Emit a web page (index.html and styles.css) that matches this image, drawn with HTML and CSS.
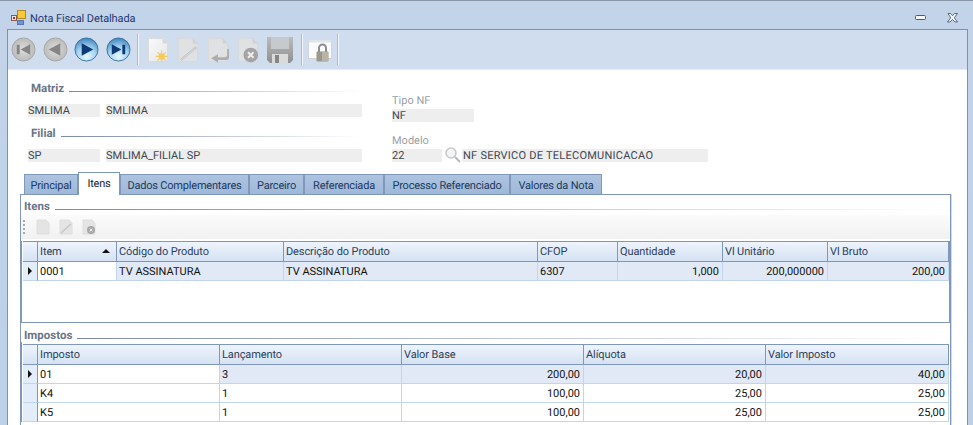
FILE: index.html
```html
<!DOCTYPE html>
<html lang="pt">
<head>
<meta charset="utf-8">
<title>Nota Fiscal Detalhada</title>
<link rel="stylesheet" href="styles.css">
</head>
<body>
<div class="window">
  <header class="titlebar">
    <svg class="app-icon" width="16" height="16" viewBox="0 0 16 16"><rect x="0.500" y="5.500" width="5" height="5" fill="#e8e8e8" stroke="#8a5a50"/><rect x="2" y="7" width="2" height="2" fill="#c8281c"/><rect x="6.500" y="0.500" width="8" height="8" fill="#f7c934" stroke="#b08a20"/><rect x="6.500" y="10.500" width="6" height="4" fill="#6c94d8" stroke="#5a78b0"/></svg>
    <span class="title">Nota Fiscal Detalhada</span>
    <span class="win-btns">
      <svg width="12" height="6" viewBox="0 0 12 6"><rect x="0.500" y="0.500" width="10" height="4" rx="1" fill="#f4f6fa" stroke="#4c5a70"/></svg>
      <svg width="12" height="10" viewBox="0 0 12 10"><path d="M1 .5h2.500L5.500 2.700 7.500 .5H10.500L7.300 4.800l3.200 4.200H8L5.500 6.500 3 9H.5l3.200-4.200z" fill="#f4f6fa" stroke="#4c5a70" stroke-width=".9"/></svg>
    </span>
  </header>
  <div class="client">
    <div class="toolbar">
      <svg class="nav" viewBox="0 0 26 26"><defs><radialGradient id="g" cx=".5" cy=".5" r=".6"><stop offset="0" stop-color="#dedede"/><stop offset="1" stop-color="#b4b4b4"/></radialGradient></defs><circle cx="13" cy="13" r="12" fill="url(#g)" stroke="#a8a8a8"/><path d="M6 8h3v10H6zM20 7.500v11L10 13z" fill="#858585"/></svg>
      <svg class="nav" viewBox="0 0 26 26"><circle cx="13" cy="13" r="12" fill="url(#g)" stroke="#a8a8a8"/><path d="M18 6.500v13L6 13z" fill="#858585"/></svg>
      <svg class="nav" viewBox="0 0 26 26"><defs><radialGradient id="b" cx=".5" cy=".8" r=".8"><stop offset="0" stop-color="#e8f6fe"/><stop offset=".5" stop-color="#a6d5f2"/><stop offset="1" stop-color="#3f82ba"/></radialGradient></defs><circle cx="13" cy="13" r="12" fill="url(#b)" stroke="#3a759f"/><path d="M8 6.500v13L20 13z" fill="#0e3a78"/></svg>
      <svg class="nav" viewBox="0 0 26 26"><circle cx="13" cy="13" r="12" fill="url(#b)" stroke="#3a759f"/><path d="M6 7.500v11L16 13zM17 8h3v10h-3z" fill="#0e3a78"/></svg>
      <i class="sep s1"></i>
      <svg class="tool" viewBox="0 0 24 28"><defs><linearGradient id="d" x1="0" y1="0" x2="1" y2="1"><stop offset="0" stop-color="#fafafa"/><stop offset="1" stop-color="#e6e6e6"/></linearGradient></defs><path d="M1.500 1.500H17L22.500 7V26.500H1.500z" fill="url(#d)" stroke="#d8d8d8"/><path d="M17 1.500V7H22.500z" fill="#d8d8d8"/><circle cx="16" cy="21" r="3.500" fill="#f5cb58"/><path d="M16 14.500v13M9.500 21h13M11.500 16.500l9 9M20.500 16.500l-9 9" stroke="#f5cb58" stroke-width="1.200"/></svg>
      <svg class="tool" viewBox="0 0 24 28"><path d="M1.500 1.500H17L22.500 7V26.500H1.500z" fill="#dfe1e3" stroke="#d6d8da"/><path d="M17 1.500V7H22.500z" fill="#cfd2d6"/><path d="M4 25L21 11" stroke="#c4c4c4" stroke-width="2.500"/><path d="M3 26L20 12" stroke="#eee" stroke-width=".6"/></svg>
      <svg class="tool" viewBox="0 0 24 28"><path d="M1.500 1.500H17L22.500 7V26.500H1.500z" fill="#dfe1e3" stroke="#d6d8da"/><path d="M17 1.500V7H22.500z" fill="#cfd2d6"/><path d="M22 13v6q0 3-3 3h-7v-3.500L4.500 23l7.500 5v-3h9q3 0 3-3v-9z" fill="#aeaeae"/></svg>
      <svg class="tool" viewBox="0 0 24 28"><path d="M1.500 1.500H17L22.500 7V26.500H1.500z" fill="#dfe1e3" stroke="#d6d8da"/><path d="M17 1.500V7H22.500z" fill="#cfd2d6"/><circle cx="15" cy="19.500" r="8" fill="#a4a4a4"/><path d="M12 16.500l6 6M18 16.500l-6 6" stroke="#eee" stroke-width="2.200"/></svg>
      <svg class="tool disk" viewBox="0 0 28 28"><defs><linearGradient id="k" x1="0" y1="0" x2="0" y2="1"><stop offset="0" stop-color="#bcbcbc"/><stop offset="1" stop-color="#8f8f8f"/></linearGradient></defs><path d="M1 1h26v23l-3 3H4l-3-3z" fill="url(#k)"/><rect x="5" y="1" width="18" height="12" fill="#c6cacd"/><rect x="6" y="18" width="16" height="9" fill="#dadada"/><rect x="9" y="19" width="4" height="8" fill="#858585"/></svg>
      <i class="sep s2"></i>
      <svg class="tool lock" viewBox="0 0 24 26"><rect x="0.500" y="2.500" width="23" height="19" fill="#fbfbfb" stroke="#d4d4d4"/><rect x="0.500" y="2.500" width="23" height="3" fill="#dfe3ea"/><path d="M11 15v-4a3.500 3.500 0 0 1 7 0v4" fill="none" stroke="#8c8c8c" stroke-width="2"/><rect x="8.500" y="14.500" width="12" height="10" rx="1" fill="#9c988a"/><rect x="14" y="15" width="6" height="9" fill="#b8b4a6"/></svg>
      <i class="sep s3"></i>
    </div>
    <main class="body">
      <section class="head">
        <div class="col-left">
          <div class="rule-title first"><b>Matriz</b><span></span></div>
          <div class="fields"><span class="val code">SMLIMA</span><span class="val name">SMLIMA</span></div>
          <div class="rule-title second"><b>Filial</b><span></span></div>
          <div class="fields"><span class="val code">SP</span><span class="val name">SMLIMA_FILIAL SP</span></div>
        </div>
        <div class="col-right">
          <label class="cap">Tipo NF</label>
          <div class="fields"><span class="val tipo">NF</span></div>
          <label class="cap model">Modelo</label>
          <div class="fields"><span class="val mod">22</span>
            <svg class="lens" width="18" height="18" viewBox="0 0 18 18"><circle cx="7" cy="7" r="5" fill="#f2f4f6" stroke="#c4c8cc" stroke-width="1.500"/><path d="M11 11l5 5" stroke="#b4b8bc" stroke-width="2"/></svg>
            <span class="val desc">NF SERVICO DE TELECOMUNICACAO</span></div>
        </div>
      </section>
      <nav class="tabs">
        <a class="tab t1">Principal</a><a class="tab active t2">Itens</a><a class="tab t3">Dados Complementares</a><a class="tab t4">Parceiro</a><a class="tab t5">Referenciada</a><a class="tab t6">Processo Referenciado</a><a class="tab t7">Valores da Nota</a>
      </nav>
      <section class="panel">
        <div class="rule-title items"><b>Itens</b><span></span></div>
        <div class="mini-bar">
          <i class="grip"></i>
          <svg width="14" height="16" viewBox="0 0 14 16"><path d="M1 1h9l3 3v11H1z" fill="#e4e4e4" stroke="#dedede"/></svg>
          <svg width="14" height="16" viewBox="0 0 14 16"><path d="M1 1h9l3 3v11H1z" fill="#e4e4e4" stroke="#dedede"/><path d="M2 14L12 5" stroke="#c6c6c6" stroke-width="1.500"/></svg>
          <svg width="14" height="16" viewBox="0 0 14 16"><path d="M1 1h9l3 3v11H1z" fill="#e4e4e4" stroke="#dedede"/><circle cx="9" cy="11" r="4" fill="#a8a8a8"/><path d="M7.500 9.500l3 3M10.500 9.500l-3 3" stroke="#eee"/></svg>
        </div>
        <div class="grid grid-items">
          <table>
            <colgroup><col class="c-rh"><col class="c-item"><col class="c-cod"><col class="c-desc"><col class="c-cfop"><col class="c-qtd"><col class="c-vu"><col class="c-vb"></colgroup>
            <thead><tr><th></th><th class="sorted">Item<i class="sort"></i></th><th>Código do Produto</th><th>Descrição do Produto</th><th>CFOP</th><th>Quantidade</th><th>Vl Unitário</th><th>Vl Bruto</th></tr></thead>
            <tbody><tr class="sel"><td class="rh"><i class="arrow"></i></td><td class="plain">0001</td><td>TV ASSINATURA</td><td>TV ASSINATURA</td><td>6307</td><td class="num">1,000</td><td class="num">200,000000</td><td class="num">200,00</td></tr></tbody>
          </table>
        </div>
        <div class="rule-title taxes"><b>Impostos</b><span></span></div>
        <div class="grid grid-taxes">
          <table>
            <colgroup><col class="c-rh"><col class="c-tax"><col class="c-tax"><col class="c-tax"><col class="c-tax"><col class="c-tax-last"></colgroup>
            <thead><tr><th></th><th>Imposto</th><th>Lançamento</th><th>Valor Base</th><th>Alíquota</th><th>Valor Imposto</th></tr></thead>
            <tbody>
              <tr class="sel"><td class="rh"><i class="arrow"></i></td><td class="plain">01</td><td>3</td><td class="num">200,00</td><td class="num">20,00</td><td class="num">40,00</td></tr>
              <tr><td class="rh"></td><td>K4</td><td>1</td><td class="num">100,00</td><td class="num">25,00</td><td class="num">25,00</td></tr>
              <tr><td class="rh"></td><td>K5</td><td>1</td><td class="num">100,00</td><td class="num">25,00</td><td class="num">25,00</td></tr>
            </tbody>
          </table>
        </div>
      </section>
    </main>
  </div>
</div>
</body>
</html>
```
FILE: styles.css
```css
* { box-sizing: border-box; }
html, body { margin: 0; height: 425px; overflow: hidden; }
body { font: 11px/13px Roboto, "Liberation Sans", sans-serif; color: #1e2a3a; text-rendering: geometricPrecision; }
.window { width: 973px; height: 425px; background: linear-gradient(#c3d4e9, #bdd0e8); border-top: 1px solid #8a97a8; display: flex; flex-direction: column; overflow: hidden; }
.titlebar { height: 28px; flex: none; display: flex; align-items: center; padding: 6px 0 0 11px; }
.app-icon { margin-right: 3px; }
.title { color: #1f3a72; font-size: 11px; letter-spacing: -.1px; }
.win-btns { margin-left: auto; display: flex; align-items: center; gap: 20px; padding-right: 14px; }
.client { flex: 1; margin: 0 5px 0 7px; border: solid #7e92ae; border-width: 1px 1px 0 1px; background: #fff; min-height: 0; }
.toolbar { height: 40px; background: #d0ddee; border-bottom: 1px solid #e6ecf5; display: flex; align-items: center; padding: 0 0 0 3px; }
.nav { width: 25px; height: 25px; margin-right: 6.5px; }
.sep { width: 1px; height: 31px; background: #f2f5fa; box-shadow: -1px 0 0 #a9bcd6; flex: none; }
.s1 { margin: 0 8px 0 1px; }
.s2 { margin: 0 5px 0 0; }
.s3 { margin: 0 0 0 6px; }
.tool { width: 22px; height: 28px; margin-right: 8px; flex: none; }
.tool.disk { width: 28px; margin-left: -1px; margin-right: 8px; }
.tool.lock { width: 24px; height: 26px; margin-right: 0; }
.body { padding: 0 0 0 12px; }
.head { display: flex; height: 102px; padding-left: 8px; }
.col-left { width: 334px; padding-top: 12px; }
.col-right { margin-left: 30px; padding-top: 24px; }
.rule-title { display: flex; align-items: center; height: 13px; }
.rule-title b { color: #6a7488; font-weight: 700; font-size: 11.5px; }
.rule-title span { flex: 1; height: 1px; margin: 6px 0 0 5px; background: linear-gradient(90deg, #7b8aa6, #ffffff); }
.rule-title.first, .rule-title.second { padding-left: 3px; }
.rule-title.first { margin-bottom: 9px; }
.rule-title.second { margin: 10px 0 9px; }
.fields { display: flex; align-items: center; height: 13px; }
.val { display: block; height: 13px; background: #eeeeee; color: #3f4650; line-height: 13px; white-space: nowrap; }
.code { width: 72px; }
.name { width: 256px; margin-left: 6px; }
.tipo { width: 82px; }
.mod { width: 50px; }
.desc { width: 246px; padding-left: 1px; letter-spacing: .25px; }
.lens { margin: -1px 0 0 2px; flex: none; }
.cap { display: block; color: #9a9fa6; height: 13px; margin-bottom: 2px; line-height: 13px; }
.cap.model { margin-top: 12px; }
.tabs { display: flex; height: 22px; align-items: flex-end; padding-left: 4px; position: relative; z-index: 1; }
.tab { display: block; height: 20px; background: linear-gradient(#adc3e0, #a0b9d9); border: 1px solid #7e97ba; border-bottom: 0; color: #203a60; text-align: center; line-height: 21px; white-space: nowrap; letter-spacing: -.2px; }
.tab.active { height: 23px; background: #fff; margin-bottom: -1px; color: #1a2433; }
.t1 { width: 54px; } .t2 { width: 42px; } .t3 { width: 129px; } .t4 { width: 55px; } .t5 { width: 80px; } .t6 { width: 126px; } .t7 { width: 92px; }
.panel { width: 931px; height: 240px; border: 1px solid #7e97ba; border-bottom: 0; box-shadow: 1px 0 0 #d8d8d8; }
.rule-title.items { padding-left: 3px; margin-top: 5px; }
.rule-title.items span, .rule-title.taxes span { margin-top: 5px; }
.mini-bar { height: 24px; margin-top: 2px; background: linear-gradient(#fbfbfb, #f1f1f1); display: flex; align-items: center; gap: 9px; padding-left: 2px; }
.grip { width: 2px; height: 14px; background: repeating-linear-gradient(#a8a8a8 0 2px, transparent 2px 4px); margin-right: 2px; }
.grid { margin: 2px 0 0 0; width: 929px; border-left: 1px solid #7e97ba; padding-left: 1px; }
.grid-items { height: 82px; border-bottom: 1px solid #7e97ba; border-right: 1px solid #7e97ba; }
.grid table { border-collapse: separate; border-spacing: 0; table-layout: fixed; width: 926px; }
.c-rh { width: 15px; } .c-item { width: 79px; } .c-cod { width: 167px; } .c-desc { width: 254px; } .c-cfop { width: 80px; } .c-qtd { width: 105px; } .c-vu { width: 105px; } .c-vb { width: 121px; }
.c-tax { width: 182px; } .c-tax-last { width: 183px; }
th { height: 21px; padding: 0 3px 0 2px; font-weight: 400; text-align: left; color: #2c3f5c; background: linear-gradient(#eef4fc, #d5e2f3); border: solid #7e97ba; border-width: 1px 1px 1px 0; position: relative; white-space: nowrap; letter-spacing: -.1px; }
td { height: 19px; padding: 0 3px 0 2px; color: #111; border-right: 1px solid #c2d5ee; border-bottom: 1px solid #c2d5ee; white-space: nowrap; overflow: hidden; }
tr.sel td { background: #e0e9f5; }
tr.sel td.plain { background: #fff; }
tr.sel td.rh, td.rh { background: #e3edf9; border-right: 1px solid #7e97ba; padding: 0 0 0 5px; }
.num { text-align: right; }
.sort { position: absolute; right: 6px; top: 7px; border: solid transparent; border-width: 0 4px 4px; border-bottom-color: #111; }
.arrow { display: block; width: 0; height: 0; border: solid transparent; border-width: 4px 0 4px 4px; border-left-color: #111; }
.rule-title.taxes { padding-left: 3px; margin-top: 6px; }
.grid-taxes { margin-top: 0; padding-top: 2px; }
```
